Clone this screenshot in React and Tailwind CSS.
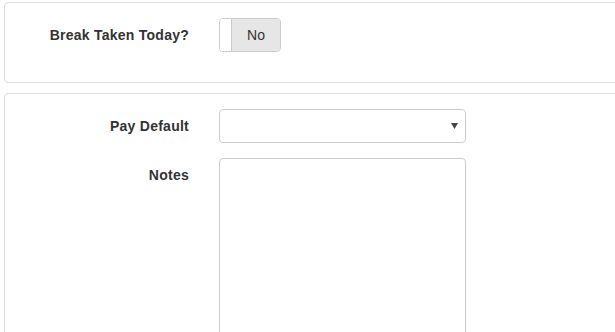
export default function App() {
  return (
    <div className="w-[615px] h-[332px] overflow-hidden bg-white" style={{ fontFamily: '"Liberation Sans", Arial, sans-serif' }}>
      <div className="pl-[4px] pt-[2px] w-[660px]">
        <div className="border border-[#dddddd] rounded-[4px] h-[81px] pt-[15px]">
          <div className="flex items-center">
            <div className="w-[184px] text-right text-[14px] tracking-[0.25px] font-bold text-[#333333]">Break Taken Today?</div>
            <div className="ml-[30px] flex h-[34px] w-[62px] border border-[#cccccc] rounded-[4px] overflow-hidden">
              <div className="w-[12px] bg-white border-r border-[#cccccc]"></div>
              <div className="flex-1 bg-[#e6e6e6] flex items-center justify-center text-[14px] text-[#333333]">No</div>
            </div>
          </div>
        </div>
        <div className="mt-[10px] border border-[#dddddd] rounded-[4px] h-[300px] pt-[15px]">
          <div className="flex items-center">
            <div className="w-[184px] text-right text-[14px] tracking-[0.25px] font-bold text-[#333333]">Pay Default</div>
            <div className="ml-[30px] h-[34px] w-[247px] border border-[#cccccc] rounded-[4px] bg-white flex items-center justify-end pr-[7px]">
              <svg width="7" height="6" viewBox="0 0 7 6"><path d="M0 0 L7 0 L3.5 6 Z" fill="#444444" /></svg>
            </div>
          </div>
          <div className="flex items-start mt-[15px]">
            <div className="w-[184px] text-right text-[14px] tracking-[0.25px] font-bold text-[#333333] pt-[7px]">Notes</div>
            <div className="ml-[30px] h-[200px] w-[247px] border border-[#cccccc] rounded-[4px] bg-white"></div>
          </div>
        </div>
      </div>
    </div>
  );
}
